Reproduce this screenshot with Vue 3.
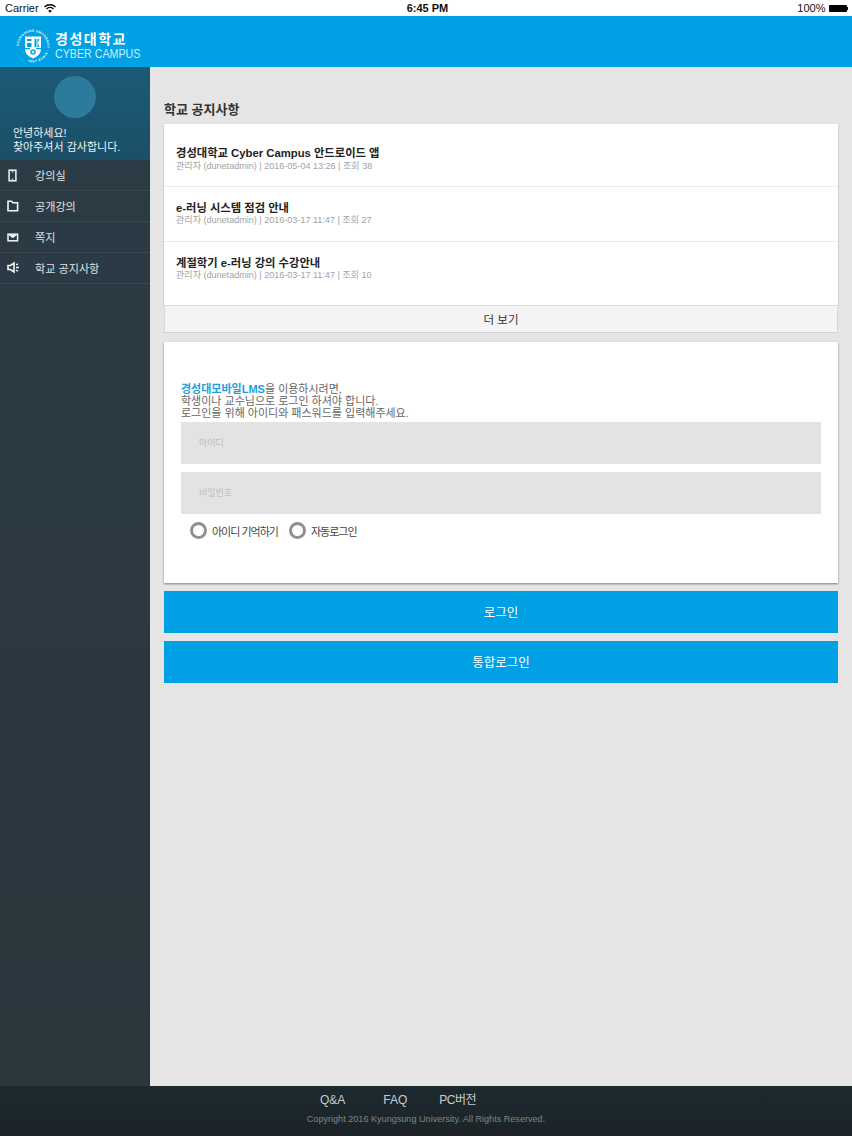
<script setup>
const menu = [
  { label: '강의실', icon: 'room' },
  { label: '공개강의', icon: 'folder' },
  { label: '쪽지', icon: 'mail' },
  { label: '학교 공지사항', icon: 'speaker' },
]
const notices = [
  { title: '경성대학교 Cyber Campus 안드로이드 앱', meta: '관리자 (dunetadmin) | 2016-05-04 13:26 | 조회 38' },
  { title: 'e-러닝 시스템 점검 안내', meta: '관리자 (dunetadmin) | 2016-03-17 11:47 | 조회 27' },
  { title: '계절학기 e-러닝 강의 수강안내', meta: '관리자 (dunetadmin) | 2016-03-17 11:47 | 조회 10' },
]
</script>

<template>
  <div class="page">
    <div class="status">
      <div class="carrier">
        Carrier
        <svg width="12" height="9" viewBox="0 0 12 9">
          <path d="M0.5 3 A8 8 0 0 1 11.5 3" fill="none" stroke="#000" stroke-width="1.4" />
          <path d="M2.5 5 A5 5 0 0 1 9.5 5" fill="none" stroke="#000" stroke-width="1.4" />
          <path d="M4.2 6.8 A2.6 2.6 0 0 1 7.8 6.8 L6 8.8 Z" fill="#000" />
        </svg>
      </div>
      <div class="clock">6:45 PM</div>
      <div class="battery">
        100%
        <span class="cell"></span><span class="nub"></span>
      </div>
    </div>

    <header class="topbar">
      <svg class="seal" width="36" height="36" viewBox="0 0 36 36">
        <defs>
          <path id="ring" d="M18 18 m-14.2 0 a14.2 14.2 0 1 1 28.4 0 a14.2 14.2 0 1 1 -28.4 0" />
        </defs>
        <text class="ring-text" fill="#fff" font-size="3.2" font-weight="700" letter-spacing="0.3">
          <textPath href="#ring">KYUNGSUNG UNIVERSITY · SINCE 1955</textPath>
        </text>
        <path d="M10 8.5 H26 V21 C26 26 22 28.5 18 30.5 C14 28.5 10 26 10 21 Z" fill="#fff" />
        <path d="M12 11 H16.5 V13 H12 Z M12 15 H16.5 V19 H12 Z M19.5 11 H21.5 V19 H19.5 Z M22.5 11 H24.4 L22.8 15 L24.4 19 H22.5 Z" fill="#00a0e4" />
        <path d="M10 20 H15 V21.2 H10 Z M21 20 H26 V21.2 H21 Z" fill="#00a0e4" />
        <circle cx="18" cy="24" r="2.8" fill="#00a0e4" />
        <path d="M17.4 22.5 H18.6 V25.5 H17.4 Z M16.5 23.4 H19.5 V24.6 H16.5 Z" fill="#fff" />
      </svg>
      <div class="brand">
        <div class="brand-ko">경성대학교</div>
        <div class="brand-en">CYBER CAMPUS</div>
      </div>
    </header>

    <div class="body">
      <aside class="side">
        <div class="profile">
          <div class="avatar"></div>
          <p>안녕하세요!<br />찾아주셔서 감사합니다.</p>
        </div>
        <nav>
          <a v-for="m in menu" :key="m.label" class="item">
            <span class="ico">
              <svg width="14" height="14" viewBox="0 0 14 14">
                <g v-if="m.icon === 'room'">
                  <rect x="3.1" y="2.2" width="6.8" height="10.6" fill="none" stroke="#f4f6f7" stroke-width="1.5" />
                  <rect x="5.6" y="3.4" width="1.8" height="1" fill="#f4f6f7" />
                  <rect x="5.6" y="10.6" width="1.8" height="1" fill="#f4f6f7" />
                </g>
                <path v-else-if="m.icon === 'folder'" d="M2 2.2 H5.5 L7 3.8 H11.6 V11.8 H2 Z" fill="none" stroke="#f4f6f7" stroke-width="1.6" />
                <g v-else-if="m.icon === 'mail'">
                  <rect x="2" y="4.2" width="9.6" height="6.6" fill="none" stroke="#f4f6f7" stroke-width="1.5" />
                  <path d="M2 4.4 H11.6 L6.8 8.2 Z" fill="#f4f6f7" />
                </g>
                <g v-else>
                  <path d="M2 4.5 H4.5 L8 2 V11 L4.5 8.5 H2 Z" fill="none" stroke="#f4f6f7" stroke-width="1.6" />
                  <path d="M10 3.8 L12 2.8 M10 6.5 H13 M10 9.2 L12 10.2" stroke="#f4f6f7" stroke-width="1.3" />
                </g>
              </svg>
            </span>
            {{ m.label }}
          </a>
        </nav>
      </aside>

      <main class="main">
        <h2>학교 공지사항</h2>
        <section class="notices">
          <div v-for="n in notices" :key="n.title" class="notice">
            <div class="n-title">{{ n.title }}</div>
            <div class="n-meta">{{ n.meta }}</div>
          </div>
        </section>
        <button class="more">더 보기</button>

        <section class="login">
          <p class="intro">
            <b>경성대모바일LMS</b>을 이용하시려면,<br />
            학생이나 교수님으로 로그인 하셔야 합니다.<br />
            로그인을 위해 아이디와 패스워드를 입력해주세요.
          </p>
          <input class="field first" placeholder="아이디" />
          <input class="field" placeholder="비밀번호" />
          <div class="checks">
            <label><span class="radio"></span>아이디 기억하기</label>
            <label><span class="radio"></span>자동로그인</label>
          </div>
        </section>

        <button class="cta">로그인</button>
        <button class="cta">통합로그인</button>
      </main>
    </div>

    <footer class="foot">
      <div class="links">
        <a>Q&amp;A</a>
        <a>FAQ</a>
        <a>PC버전</a>
      </div>
      <div class="copy">Copyright 2016 Kyungsung University. All Rights Reserved.</div>
    </footer>
  </div>
</template>

<style scoped>
.page {
  width: 852px;
  height: 1136px;
  display: flex;
  flex-direction: column;
  overflow: hidden;
  background: #e5e5e6;
  font-family: "Liberation Sans", "Noto Sans CJK KR", sans-serif;
}
.status {
  height: 16px;
  flex: none;
  background: #fff;
  display: grid;
  grid-template-columns: 1fr auto 1fr;
  align-items: center;
  padding: 0 4px 0 5px;
  font-size: 11px;
  color: #111;
}
.carrier {
  display: flex;
  align-items: center;
  gap: 5px;
}
.clock {
  font-weight: 700;
  padding-left: 2px;
}
.battery {
  display: flex;
  align-items: center;
  justify-content: flex-end;
}
.cell {
  width: 18px;
  height: 7px;
  margin-left: 3px;
  background: #000;
  border-radius: 1px;
}
.nub {
  width: 1.5px;
  height: 3px;
  background: #000;
}
.topbar {
  height: 51px;
  flex: none;
  box-sizing: border-box;
  background: #00a0e4;
  display: flex;
  align-items: center;
  padding: 8px 0 0 15px;
  gap: 4px;
  color: #fff;
}
.seal {
  flex: none;
}
.brand-ko {
  font-size: 14px;
  font-weight: 700;
  line-height: 16px;
  letter-spacing: 1.5px;
}
.brand-en {
  font-size: 13px;
  line-height: 14px;
  color: #cdebfa;
  transform: scaleX(0.82);
  transform-origin: left center;
  white-space: nowrap;
}
.body {
  flex: 1;
  display: flex;
  min-height: 0;
}
.side {
  width: 150px;
  flex: none;
  background: linear-gradient(180deg, #2b3c46, #2b353c);
}
.profile {
  height: 93px;
  box-sizing: border-box;
  padding-top: 9px;
  background: linear-gradient(180deg, #1c5a76, #1b4f67);
  color: #eef3f5;
}
.avatar {
  width: 42px;
  height: 42px;
  margin: 0 auto;
  border-radius: 50%;
  background: #2c7a9c;
}
.profile p {
  margin: 8px 0 0 13px;
  font-size: 11px;
  line-height: 14px;
}
.item {
  display: flex;
  align-items: center;
  height: 31px;
  box-sizing: border-box;
  border-bottom: 1px solid #3b464d;
  color: #dfe3e5;
  font-size: 11.1px;
}
.ico {
  width: 35px;
  padding-left: 6px;
  box-sizing: border-box;
  display: flex;
}
.main {
  flex: 1;
  padding: 0 14px;
  min-width: 0;
}
h2 {
  margin: 34px 0 6px;
  font-size: 13px;
  line-height: 17px;
  font-weight: 700;
  color: #333;
}
.notices {
  height: 181px;
  box-sizing: border-box;
  padding-top: 8px;
  background: #fff;
  box-shadow: 0 1px 2px rgba(0, 0, 0, 0.25);
}
.notice {
  height: 55px;
  box-sizing: border-box;
  padding: 14px 12px 0;
  border-bottom: 1px solid #ececec;
}
.notice:last-child {
  border-bottom: 0;
}
.notice + .notice .n-meta {
  margin-top: -1px;
}
.n-title {
  font-size: 11.3px;
  line-height: 14px;
  font-weight: 700;
  color: #222;
}
.n-meta {
  font-size: 9.05px;
  line-height: 12px;
  color: #a3a3a3;
}
.more {
  display: block;
  width: 100%;
  height: 28px;
  padding: 0;
  border: 0;
  border-top: 1px solid #dcdcdc;
  border-bottom: 1px solid #d2d2d2;
  background: #f4f4f5;
  box-shadow: inset 1px 0 #d8d8d8, inset -1px 0 #d8d8d8;
  font: inherit;
  font-size: 11.5px;
  color: #333;
}
.login {
  height: 241px;
  box-sizing: border-box;
  margin: 9px 0 8px;
  padding: 41px 17px 0;
  background: #fff;
  box-shadow: 0 1px 2px rgba(0, 0, 0, 0.45);
}
.intro {
  margin: 0 0 3px;
  font-size: 11px;
  line-height: 12px;
  color: #666;
}
.intro b {
  color: #1a9fe0;
}
.field {
  display: block;
  width: 100%;
  height: 42px;
  box-sizing: border-box;
  margin-top: 8px;
  padding: 0 18px;
  border: 0;
  outline: 0;
  background: #e3e3e4;
  font: inherit;
  font-size: 9px;
}
.field.first {
  margin-top: 0;
}
.field::placeholder {
  color: #bdbdbd;
}
.checks {
  display: flex;
  gap: 11px;
  padding: 8px 0 0 9px;
}
.checks label {
  display: flex;
  align-items: center;
  gap: 5px;
  font-size: 11px;
  letter-spacing: -1px;
  color: #444;
}
.radio {
  width: 17px;
  height: 17px;
  box-sizing: border-box;
  border: 3px solid #8f8f90;
  border-radius: 50%;
  background: #fff;
}
.cta {
  display: block;
  width: 100%;
  height: 42px;
  margin-bottom: 8px;
  padding: 0 0 2px;
  border: 0;
  background: #00a0e4;
  color: #fff;
  font: inherit;
  font-size: 12.5px;
}
.foot {
  height: 50px;
  flex: none;
  background: linear-gradient(180deg, #1b2a30, #1d2327);
  display: flex;
  flex-direction: column;
  align-items: center;
}
.links {
  display: flex;
  gap: 38px;
  padding: 7px 56px 0 0;
  font-size: 12px;
  line-height: 14px;
  color: #c9cdcf;
}
.links a:last-child {
  margin-left: -6px;
  letter-spacing: -0.5px;
}
.copy {
  margin-top: 6px;
  font-size: 9.1px;
  line-height: 12px;
  color: #7d8589;
}
</style>
